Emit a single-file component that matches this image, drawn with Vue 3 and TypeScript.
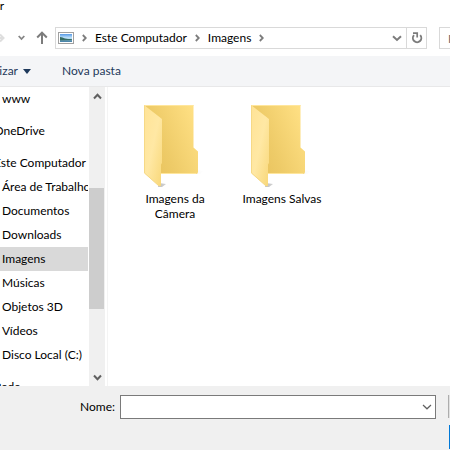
<script setup lang="ts">
import { ref } from 'vue'

interface Place {
  name: string
  root?: boolean
}

const places: Place[] = [
  { name: 'www' },
  { name: 'OneDrive', root: true },
  { name: 'Este Computador', root: true },
  { name: 'Área de Trabalho' },
  { name: 'Documentos' },
  { name: 'Downloads' },
  { name: 'Imagens' },
  { name: 'Músicas' },
  { name: 'Objetos 3D' },
  { name: 'Vídeos' },
  { name: 'Disco Local (C:)' },
  { name: 'Rede', root: true },
]

const folders: string[] = ['Imagens da Câmera', 'Imagens Salvas']
const selected = ref('Imagens')
const fileName = ref('')
</script>

<template>
  <div class="dialog">
    <header class="title"><span>Abrir</span></header>

    <div class="location">
      <div class="history">
        <button class="plain" aria-label="Avançar">
          <svg width="5" height="12" viewBox="0 0 5 12"><path d="M0 2.500L3.500 6L0 9.500M0 6h3" fill="none" stroke="#dedede" stroke-width="2" /></svg>
        </button>
        <button class="plain recent" aria-label="Locais recentes">
          <svg width="7" height="6" viewBox="0 0 7 6"><path d="M.7 1l2.800 3L6.300 1" fill="none" stroke="#868686" stroke-width="1.800" /></svg>
        </button>
        <button class="plain up" aria-label="Acima">
          <svg width="12" height="14" viewBox="0 0 12 14"><path d="M6 13V2M1.200 6.500L6 1.700l4.800 4.800" fill="none" stroke="#7c7c7c" stroke-width="2" /></svg>
        </button>
      </div>
      <div class="address">
        <svg class="picture" width="16" height="12" viewBox="0 0 16 12">
          <defs>
            <linearGradient id="sky" x1="0" y1="0" x2="0" y2="1">
              <stop offset="0" stop-color="#5799e6" />
              <stop offset=".5" stop-color="#c5e6fa" />
              <stop offset=".75" stop-color="#84b5d9" />
              <stop offset="1" stop-color="#3b789d" />
            </linearGradient>
          </defs>
          <rect x=".5" y=".5" width="15" height="11" fill="#fff" stroke="#a0a0a0" />
          <rect x="2" y="2" width="12" height="8" fill="url(#sky)" />
          <path d="M2 5c2 0 3 1 5 1.500 2 .5 4 .5 7 .7v1L2 8.500z" fill="#356b63" />
        </svg>
        <svg class="sep" width="5" height="8" viewBox="0 0 5 8"><path d="M.8 1l3 3-3 3" fill="none" stroke="#7c7c7c" stroke-width="1.800" /></svg>
        <a href="#" class="crumb">Este Computador</a>
        <svg class="sep" width="5" height="8" viewBox="0 0 5 8"><path d="M.8 1l3 3-3 3" fill="none" stroke="#7c7c7c" stroke-width="1.800" /></svg>
        <a href="#" class="crumb">Imagens</a>
        <svg class="sep" width="5" height="8" viewBox="0 0 5 8"><path d="M.8 1l3 3-3 3" fill="none" stroke="#7c7c7c" stroke-width="1.800" /></svg>
        <button class="plain previous" aria-label="Locais anteriores">
          <svg width="10" height="7" viewBox="0 0 10 7"><path d="M1 1.300l4 3.700 4-3.700" fill="none" stroke="#7c7c7c" stroke-width="2" /></svg>
        </button>
        <button class="plain refresh" aria-label="Atualizar">
          <svg width="12" height="12" viewBox="0 0 12 12">
            <path d="M9.200 3.200A4.200 4.200 0 1 1 3 3.200" fill="none" stroke="#7c7c7c" stroke-width="1.900" />
            <path d="M2 1.200h4.200v4.300" fill="none" stroke="#7c7c7c" stroke-width="1.700" />
          </svg>
        </button>
      </div>
      <div class="search"><input type="search" aria-label="Pesquisar" placeholder="Pesquisar Imagens" /></div>
    </div>

    <div class="commands">
      <button class="plain organize">
        <span>Organizar</span>
        <svg width="8" height="5" viewBox="0 0 8 5"><path d="M0 0h8L4 5z" fill="#1e395b" /></svg>
      </button>
      <button class="plain">Nova pasta</button>
    </div>

    <main class="browser">
      <nav class="tree">
        <div class="places">
          <button
            v-for="place in places"
            :key="place.name"
            class="plain place"
            :class="{ root: place.root, selected: place.name === selected }"
            @click="selected = place.name"
          >{{ place.name }}</button>
        </div>
        <div class="scrollbar">
          <button class="plain arrow" aria-label="Rolar para cima">
            <svg width="9" height="7" viewBox="0 0 9 7"><path d="M1 5.500l3.500-3.700L8 5.500" fill="none" stroke="#606060" stroke-width="2" /></svg>
          </button>
          <div class="track"><div class="before"></div><div class="thumb"></div><div class="after"></div></div>
          <button class="plain arrow" aria-label="Rolar para baixo">
            <svg width="9" height="7" viewBox="0 0 9 7"><path d="M1 1.500l3.500 3.700L8 1.500" fill="none" stroke="#606060" stroke-width="2" /></svg>
          </button>
        </div>
      </nav>

      <section class="files">
        <button v-for="folder in folders" :key="folder" class="plain folder">
          <svg width="64" height="84" viewBox="2 0 64 84">
            <defs>
              <linearGradient id="back" x1="0" y1=".7" x2="1" y2=".2">
                <stop offset="0" stop-color="#e8c25c" />
                <stop offset=".35" stop-color="#eecb68" />
                <stop offset="1" stop-color="#ffe084" />
              </linearGradient>
              <linearGradient id="flap" x1="0" y1="0" x2="1" y2="1">
                <stop offset="0" stop-color="#ffe396" />
                <stop offset=".5" stop-color="#ffe8a4" />
                <stop offset="1" stop-color="#f8d778" />
              </linearGradient>
              <linearGradient id="shade" x1="0" y1="0" x2="1" y2="0">
                <stop offset="0" stop-color="#999" stop-opacity=".6" />
                <stop offset="1" stop-color="#ccc" stop-opacity="0" />
              </linearGradient>
            </defs>
            <path d="M55 66l8 1-4 3H50zM18 79l7 1-4 3h-4z" fill="url(#shade)" />
            <path d="M3 1h49.500v42.500l4.500 4V68q0 2-2 2H19L3 66z" fill="url(#back)" />
            <path d="M3 1.500h49.500M20 69.500h35" fill="none" stroke="#ffe69c" />
            <path d="M3 1l18 14v44l-1 1.500V81q0 2-2 1L3 69z" fill="url(#flap)" />
            <path d="M3.500 1.500v67.500L18 82" fill="none" stroke="#f6d987" />
          </svg>
          <span>{{ folder }}</span>
        </button>
      </section>
    </main>

    <footer class="footer">
      <label for="file-name">Nome:</label>
      <div class="combo">
        <input id="file-name" v-model="fileName" type="text" />
        <button class="plain" aria-label="Mostrar nomes">
          <svg width="10" height="6" viewBox="0 0 10 6"><path d="M1 1l4 3.800L9 1" fill="none" stroke="#606060" stroke-width="1.200" /></svg>
        </button>
      </div>
      <div class="actions">
        <button class="filter" aria-label="Tipo de arquivo"></button>
        <button class="open" aria-label="Abrir"></button>
      </div>
    </footer>
  </div>
</template>

<style>
body {
  margin: 0;
}
</style>

<style scoped>
.dialog {
  display: flex;
  flex-direction: column;
  height: 100vh;
  overflow: hidden;
  background: #fff;
  color: #000;
  font: 12px/16px Lato, "Open Sans", sans-serif;
}
.dialog * {
  box-sizing: border-box;
}
.plain {
  padding: 0;
  border: 0;
  background: none;
  color: inherit;
  font: inherit;
}
svg {
  display: block;
  flex: none;
}
.title {
  display: flex;
  justify-content: flex-end;
  width: 4px;
  height: 27px;
  line-height: 12px;
}
.location {
  display: flex;
  flex: none;
  height: 22px;
}
.history {
  display: flex;
  align-items: center;
  flex: none;
  width: 55px;
}
.recent {
  margin-left: 13px;
}
.up {
  margin-left: 11px;
}
.address {
  display: flex;
  flex: 1;
  align-items: center;
  min-width: 0;
  border: 1px solid #d9d9d9;
  padding-left: 2px;
}
.sep {
  margin: 0 8px;
}
.crumb {
  color: #000;
  text-decoration: none;
  white-space: nowrap;
}
.previous {
  margin-left: auto;
  padding: 0 4px;
}
.refresh {
  display: flex;
  align-items: center;
  justify-content: center;
  align-self: stretch;
  width: 20px;
  border-left: 1px solid #d9d9d9;
}
.search {
  flex: none;
  width: 11px;
  margin-left: 12px;
  overflow: hidden;
}
.search input {
  width: 180px;
  height: 22px;
  padding: 0 8px;
  border: 1px solid #d9d9d9;
  font: inherit;
}
.search input::placeholder {
  color: #6d6d6d;
}
.commands {
  display: flex;
  flex: none;
  align-items: center;
  height: 31px;
  margin-top: 7px;
  border-bottom: 1px solid #e8e8e9;
  background: #f4f5f7;
  color: #1e395b;
}
.organize {
  display: flex;
  align-items: center;
  justify-content: flex-end;
  gap: 5px;
  width: 31px;
  margin-right: 31px;
}
.browser {
  display: flex;
  flex: 1;
  min-height: 0;
}
.tree {
  display: flex;
  flex: none;
  width: 108px;
  border-right: 1px solid #f4f4f4;
}
.places {
  width: 89px;
  padding-right: 1px;
  overflow: hidden;
}
.place {
  display: block;
  width: 100%;
  height: 24px;
  padding-left: 2px;
  overflow: hidden;
  text-align: left;
  white-space: nowrap;
}
.root {
  margin-top: 8px;
  padding: 0;
  text-indent: -6px;
}
.selected {
  background: #d9d9d9;
}
.scrollbar {
  display: flex;
  flex-direction: column;
  width: 16px;
  background: #f0f0f0;
}
.arrow {
  display: flex;
  align-items: center;
  justify-content: center;
  height: 18px;
}
.track {
  display: flex;
  flex: 1;
  flex-direction: column;
}
.before {
  flex: 83;
}
.thumb {
  flex: 121;
  width: 15px;
  background: #cdcdcd;
}
.after {
  flex: 59;
}
.files {
  display: flex;
  flex: 1;
  flex-wrap: wrap;
  align-content: flex-start;
  gap: 17px;
  padding: 17px 0 0 22px;
}
.folder {
  display: flex;
  flex-direction: column;
  align-items: center;
  width: 90px;
  line-height: 15px;
}
.folder span {
  max-width: 80px;
  margin-top: 3px;
}
.footer {
  display: flex;
  flex: none;
  align-items: flex-start;
  height: 64px;
  padding-top: 9px;
  background: #f0f0f0;
}
.footer label {
  width: 115px;
  margin-right: 5px;
  line-height: 24px;
  text-align: right;
}
.combo {
  display: flex;
  flex: 1;
  height: 24px;
  border: 1px solid #7a7a7a;
  background: #fff;
}
.combo input {
  flex: 1;
  min-width: 0;
  border: 0;
  outline: 0;
  font: inherit;
}
.combo button {
  padding: 0 3px 0 4px;
}
.actions {
  display: flex;
  flex-direction: column;
  align-items: flex-start;
  gap: 7px;
  width: 2px;
  margin-left: 12px;
}
.filter,
.open {
  width: 2px;
  height: 23px;
  padding: 0;
  border: 0;
  border-left: 1px solid #adadad;
  background: #e1e1e1;
}
.open {
  width: 1px;
  height: 24px;
  margin-left: 1px;
  border-color: #0078d7;
}
</style>
